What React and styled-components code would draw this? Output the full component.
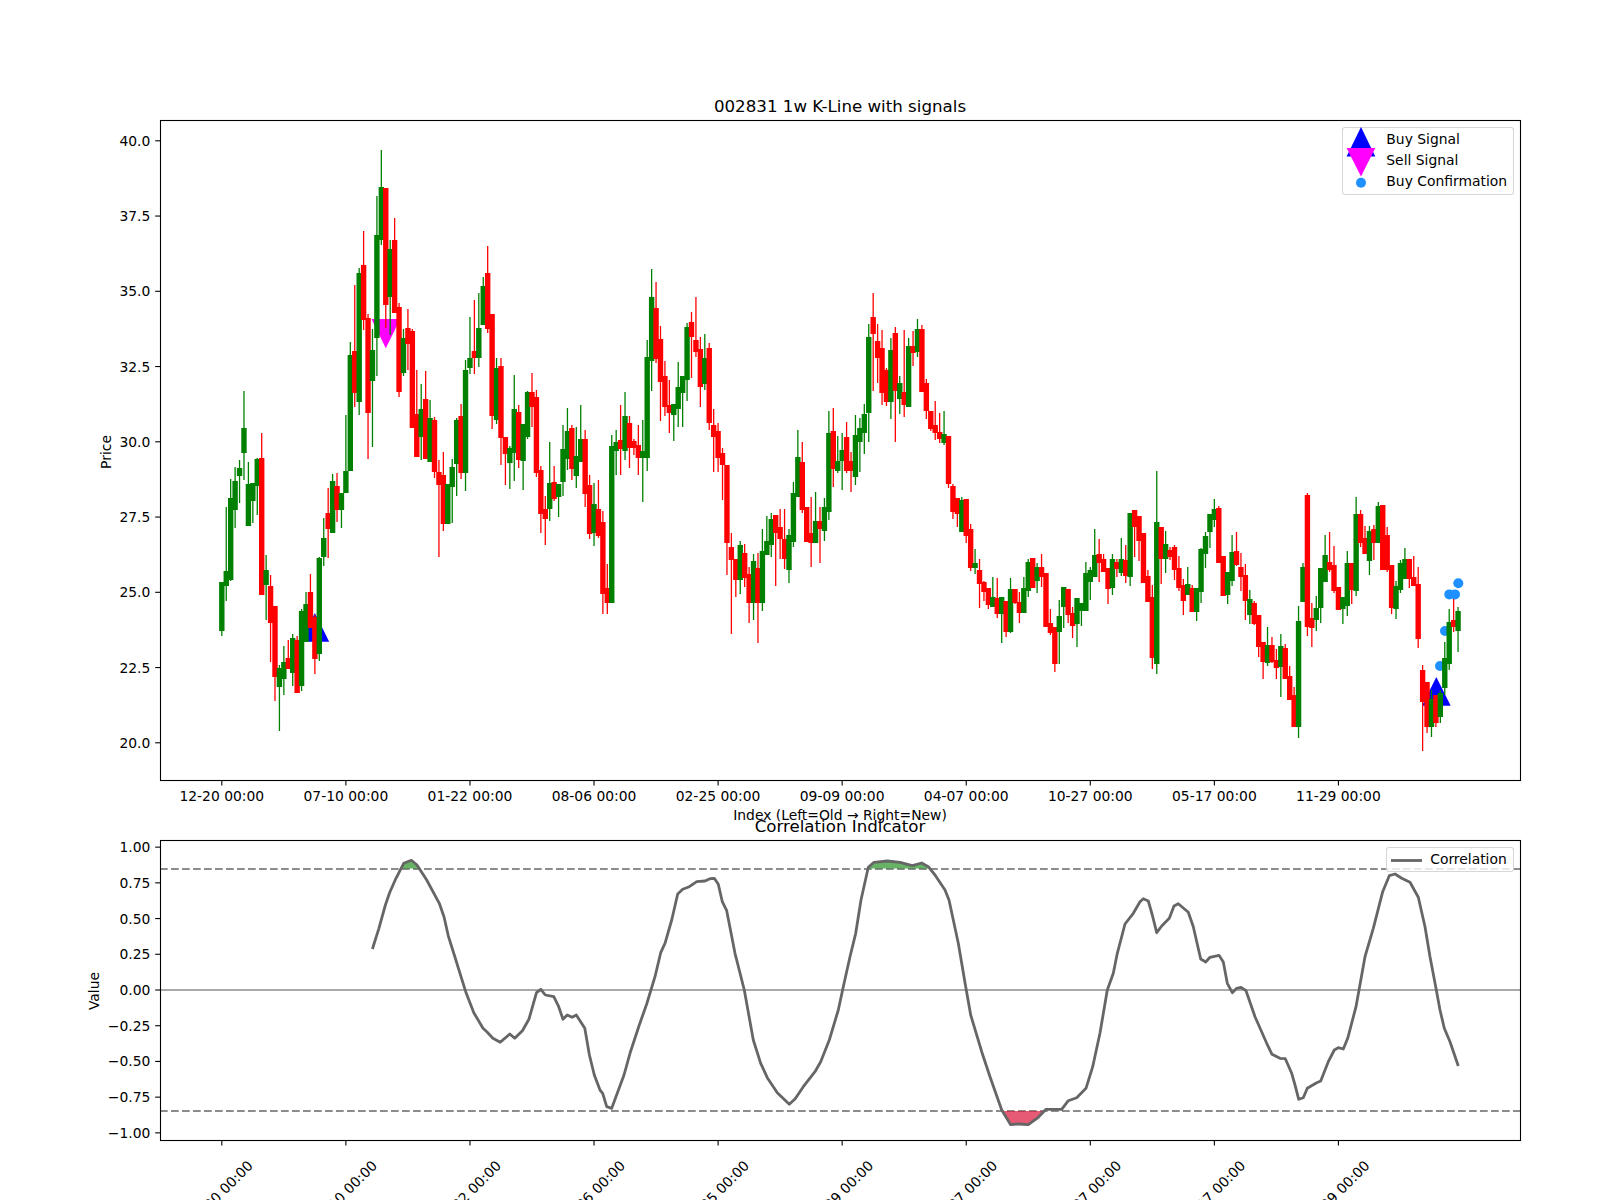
import styled, { createGlobalStyle } from "styled-components";

const FONT = `"DejaVu Sans", "Liberation Sans", sans-serif`;

// all chart data is in figure pixels: [bodyTop, bodyBottom, wickTop, wickBottom, colour]
const CANDLES = [
  [582,631,582,636,"g"],[571,586,507,601,"g"],[498,580,479,581,"g"],[481,510,467,528,"g"],[468,476,460,503,"g"],
  [428,453,391,480,"g"],[484,526,462,526,"g"],[483,501,483,523,"g"],[459,486,458,515,"g"],[458,595,433,595,"r"],
  [570,585,555,620,"g"],[586,623,575,662,"r"],[606,677,606,701,"r"],[668,687,665,731,"g"],[662,679,646,695,"g"],
  [658,669,640,669,"r"],[638,673,634,686,"g"],[640,693,636,693,"r"],[611,686,609,691,"g"],[604,642,592,642,"g"],
  [592,628,574,628,"r"],[617,659,615,674,"r"],[558,654,557,661,"g"],[538,557,518,566,"g"],[513,529,488,558,"r"],
  [481,533,474,533,"g"],[486,510,473,522,"r"],[493,510,493,528,"g"],[471,493,415,493,"g"],[355,471,342,471,"g"],
  [351,393,285,407,"r"],[273,402,268,415,"g"],[265,320,231,330,"r"],[318,413,314,459,"r"],[350,381,329,447,"g"],
  [235,338,196,376,"g"],[187,240,150,245,"g"],[188,305,188,328,"r"],[249,297,240,335,"g"],[240,313,218,313,"r"],
  [307,392,303,397,"r"],[338,373,329,376,"g"],[328,344,309,370,"r"],[331,428,329,428,"r"],[414,457,370,457,"r"],
  [409,437,384,460,"g"],[399,459,371,459,"r"],[418,462,400,462,"g"],[420,472,417,478,"r"],[472,485,460,557,"r"],
  [475,524,452,531,"r"],[484,524,484,524,"g"],[467,487,459,523,"g"],[420,464,418,496,"g"],[416,473,404,479,"r"],
  [370,473,360,491,"g"],[358,368,317,374,"g"],[351,358,300,374,"r"],[328,358,293,367,"g"],[286,325,277,325,"g"],
  [273,329,246,333,"r"],[314,416,314,429,"r"],[368,420,358,424,"g"],[366,438,358,465,"r"],[437,454,437,485,"r"],
  [448,463,446,489,"g"],[409,453,375,481,"g"],[412,460,405,468,"r"],[424,461,424,490,"g"],[392,437,391,439,"g"],
  [392,407,373,427,"r"],[397,473,390,477,"r"],[470,514,466,533,"r"],[509,519,496,545,"r"],[483,509,442,521,"g"],
  [482,499,466,501,"r"],[484,497,484,517,"g"],[449,482,425,496,"g"],[431,459,408,470,"g"],[428,469,425,480,"r"],
  [456,476,427,488,"g"],[439,462,405,462,"g"],[439,494,430,507,"r"],[485,534,475,539,"r"],[504,533,483,546,"g"],
  [509,536,480,538,"r"],[522,594,511,614,"r"],[588,603,564,614,"r"],[446,603,435,603,"g"],[442,451,430,475,"g"],
  [440,449,405,475,"r"],[416,451,392,460,"g"],[423,448,416,468,"r"],[441,448,439,455,"r"],[445,458,425,475,"r"],
  [451,458,420,502,"g"],[357,458,340,471,"g"],[297,361,269,391,"g"],[308,359,282,363,"r"],[339,382,326,421,"r"],
  [376,407,361,416,"r"],[405,413,380,433,"r"],[404,415,404,441,"g"],[387,409,362,427,"g"],[376,393,376,427,"g"],
  [327,380,323,401,"g"],[322,337,312,378,"r"],[340,352,297,357,"r"],[349,387,337,407,"r"],[358,384,334,390,"g"],
  [348,423,343,430,"r"],[425,437,409,472,"r"],[431,458,423,472,"r"],[453,465,448,500,"r"],[465,543,465,575,"r"],
  [547,560,533,634,"r"],[559,580,559,597,"r"],[545,580,541,594,"g"],[553,578,544,587,"r"],[574,603,567,623,"r"],
  [561,603,554,620,"g"],[568,603,553,643,"r"],[551,603,529,611,"g"],[541,555,516,555,"g"],[519,545,513,557,"g"],
  [515,533,515,586,"r"],[527,539,509,559,"r"],[539,559,509,569,"r"],[535,570,529,583,"g"],[493,542,482,547,"g"],
  [457,497,430,497,"g"],[462,510,442,513,"r"],[507,542,507,542,"r"],[533,543,497,567,"r"],[521,543,492,543,"g"],
  [521,529,507,563,"r"],[507,531,498,541,"g"],[433,512,411,520,"g"],[431,469,408,487,"r"],[461,471,436,473,"g"],
  [450,461,433,490,"g"],[437,471,422,473,"r"],[461,471,452,492,"r"],[435,477,415,485,"g"],[428,442,418,472,"g"],
  [414,433,404,454,"g"],[337,413,324,442,"g"],[317,334,293,391,"r"],[341,358,324,383,"r"],[348,393,330,405,"r"],
  [370,402,368,406,"r"],[350,402,338,419,"g"],[333,391,327,442,"r"],[383,399,376,414,"g"],[392,405,330,417,"r"],
  [346,407,338,407,"g"],[346,353,331,366,"r"],[329,352,319,357,"g"],[329,392,325,392,"r"],[383,411,379,419,"r"],
  [411,429,411,431,"r"],[425,433,401,440,"r"],[432,439,413,443,"r"],[434,443,411,445,"g"],[436,484,436,488,"r"],
  [486,512,484,519,"r"],[498,514,498,527,"r"],[500,532,497,532,"g"],[499,536,499,543,"r"],[529,568,524,571,"r"],
  [563,568,549,574,"g"],[570,584,559,608,"r"],[582,592,581,601,"r"],[588,605,588,609,"r"],[597,607,577,607,"g"],
  [598,614,578,618,"r"],[597,614,597,643,"g"],[601,632,601,637,"r"],[589,632,578,633,"g"],[589,603,589,604,"r"],
  [602,613,592,623,"r"],[588,613,577,613,"g"],[562,591,559,597,"g"],[558,588,558,588,"r"],[567,581,563,593,"g"],
  [567,577,554,587,"r"],[573,627,573,627,"r"],[623,633,609,635,"r"],[627,664,627,672,"r"],[616,632,600,664,"g"],
  [587,607,587,628,"g"],[589,615,589,623,"r"],[613,626,607,638,"r"],[598,624,598,647,"g"],[603,611,603,626,"g"],
  [573,611,562,611,"g"],[570,582,567,600,"g"],[555,577,529,577,"g"],[554,563,539,582,"r"],[559,572,554,572,"r"],
  [568,589,568,604,"r"],[559,588,554,595,"g"],[562,569,559,577,"r"],[559,573,538,576,"g"],[560,576,545,583,"r"],
  [513,577,513,586,"g"],[510,527,510,557,"r"],[516,541,516,561,"r"],[533,583,533,583,"r"],[576,602,570,602,"r"],
  [597,658,585,669,"r"],[522,664,471,674,"g"],[527,559,527,584,"r"],[544,559,531,573,"g"],[550,557,547,560,"r"],
  [547,570,545,580,"r"],[568,588,556,591,"r"],[585,601,579,615,"r"],[584,595,567,595,"g"],[588,612,585,612,"r"],
  [588,612,588,621,"g"],[549,592,548,603,"g"],[536,554,532,568,"g"],[514,532,514,548,"g"],[509,520,499,527,"g"],
  [508,563,506,563,"r"],[556,596,556,596,"r"],[572,595,572,604,"g"],[552,581,535,586,"g"],[551,565,532,566,"r"],
  [567,577,553,591,"r"],[575,601,564,620,"r"],[599,615,590,624,"g"],[603,624,601,625,"r"],[615,647,615,657,"r"],
  [642,662,642,679,"r"],[645,663,627,666,"g"],[645,662,637,663,"r"],[660,668,649,679,"r"],[646,667,634,697,"g"],
  [648,679,644,679,"r"],[676,700,666,700,"r"],[695,727,687,727,"r"],[621,727,606,738,"g"],[567,602,563,602,"g"],
  [495,627,493,636,"r"],[618,628,603,647,"r"],[608,620,596,631,"g"],[568,608,568,623,"g"],[555,582,535,582,"g"],
  [562,570,532,572,"r"],[565,591,546,593,"r"],[587,610,587,610,"r"],[597,609,597,624,"g"],[563,606,551,616,"g"],
  [563,590,563,604,"r"],[514,591,497,596,"g"],[514,543,510,547,"r"],[538,554,526,554,"r"],[531,561,526,575,"g"],
  [529,543,525,560,"r"],[506,543,502,543,"g"],[505,570,505,570,"r"],[535,570,527,572,"r"],[565,608,565,614,"r"],
  [586,609,581,619,"g"],[563,590,560,593,"g"],[559,579,548,579,"g"],[559,579,559,588,"r"],[577,586,556,586,"r"],
  [584,639,567,648,"r"],[670,702,665,751,"r"],[682,727,682,733,"r"],[699,727,690,737,"g"],[695,723,695,727,"r"],
  [693,717,690,723,"g"],[658,688,642,695,"g"],[622,664,609,670,"g"],[620,627,599,632,"r"],[611,631,607,652,"g"],
];

const CORRELATION = [
  [372.4,949],[378.9,928.3],[385.4,905],[389.6,892.7],[396,878.3],[403.7,863.3],[411.4,860.3],[417,865],[426.7,880],
  [439.3,903.3],[444,916.7],[448.5,936.7],[454.3,955],[461,976.7],[465.7,991.7],[473.8,1012.7],[483,1028.3],
  [486.8,1031.7],[492.9,1038.3],[500.2,1042.3],[509.8,1034],[514.7,1038.3],[522.4,1030.7],[528.9,1019.3],
  [536.5,992.7],[540.8,989.3],[545.3,995],[553.8,996.7],[558.7,1006.7],[563,1019.3],[567.2,1015],[572.1,1017.3],
  [576.3,1015],[584.8,1028.3],[589.4,1055],[594.3,1075],[600,1090],[602.7,1093.3],[606.7,1106.7],[611.7,1108.3],
  [624,1075],[630,1053.3],[639.3,1025],[646.7,1004],[655,976.7],[660.7,952.7],[665,943.3],[671.7,920],[677.7,894],
  [682.7,889.3],[689.3,886.7],[696.7,881.7],[705,881],[710,878.7],[714.3,878.3],[718.3,884.3],[722.3,901.7],
  [726.7,910.7],[735,953.3],[744.3,990],[753.3,1040],[760.7,1063.3],[767.3,1077.7],[777.3,1092.7],[789.3,1104.3],
  [795,1099],[803.3,1086.7],[815,1071.7],[820.7,1061.7],[829.3,1040],[838.3,1010],[843.3,986.7],[850,956.7],
  [855.7,933.3],[861,900],[868.3,867.3],[874,862.3],[887.3,861],[900,862.3],[912.3,865.7],[921.7,863],[928.3,866.7],
  [935,875],[945,890],[949,900],[958.3,943.3],[965.7,986.7],[970.7,1015],[981.7,1051.7],[990,1076.7],[1001.7,1110],
  [1010.7,1124.7],[1018.3,1124],[1028.3,1124.7],[1038.3,1117.3],[1046,1109.3],[1061.7,1109.3],[1068.3,1100.7],
  [1076.7,1097.7],[1086,1088.3],[1092.7,1066.7],[1100,1033],[1107.3,990],[1113.3,973.3],[1117.3,953.3],[1125,924],
  [1133.3,913.3],[1140,901.7],[1143.3,898.7],[1148.3,901],[1152.3,915],[1156.7,932.7],[1161.7,926],[1169.3,918.3],
  [1174,906],[1178.3,903.7],[1188.3,912.3],[1193.3,926.7],[1200.7,959],[1205.7,962],[1210,957.3],[1219,955.3],
  [1223.3,962],[1227.3,983.3],[1232.3,992.7],[1236.7,988.3],[1241,987.3],[1246,990.7],[1255,1016.7],[1266.7,1043.3],
  [1272,1054.3],[1280,1058.3],[1285.3,1058.7],[1291.7,1073.3],[1295,1085],[1298.7,1099.3],[1303.3,1097.7],
  [1307.3,1088.3],[1316.7,1082.7],[1320.7,1081],[1328.3,1061.7],[1334.3,1050],[1338.3,1047.7],[1343.3,1049],
  [1347.7,1038.3],[1356,1006.7],[1365,956.7],[1373.3,928.3],[1382.7,891.7],[1389.3,875.7],[1395,874],[1401.7,878.3],
  [1410,882.3],[1418.3,897.3],[1425,926.7],[1430,956.7],[1435.7,986.7],[1440,1010],[1444.3,1028.3],[1450,1041.7],
  [1458.3,1066],
];

const DATE_TICKS = [
  "12-20 00:00", "07-10 00:00", "01-22 00:00", "08-06 00:00", "02-25 00:00",
  "09-09 00:00", "04-07 00:00", "10-27 00:00", "05-17 00:00", "11-29 00:00",
];
const PRICE_TICKS = ["20.0", "22.5", "25.0", "27.5", "30.0", "32.5", "35.0", "37.5", "40.0"];
const VALUE_TICKS = ["−1.00", "−0.75", "−0.50", "−0.25", "0.00", "0.25", "0.50", "0.75", "1.00"];

const candleX = (i) => 221.82 + 4.431 * i;
const priceY = (v) => 742.8 - (v - 20) * 30.1;
const valueY = (v) => 990 - v * 142.86;
const toPoints = (pts) => pts.map((p) => p.join(",")).join(" ");

const GlobalStyle = createGlobalStyle`
  html, body {
    margin: 0;
    background: #fff;
  }
`;

const Figure = styled.div`
  box-sizing: border-box;
  width: 1600px;
  height: 1200px;
  overflow: hidden;
  padding: 96px 80px 0 160px;
  display: flex;
  flex-direction: column;
  gap: 36px;
  background: #fff;
  color: #000;
  font-family: ${FONT};
`;

const Panel = styled.section`
  width: 1360px;
`;

const Title = styled.div`
  height: 24px;
  line-height: 22px;
  font-size: 16.67px;
  text-align: center;
`;

const Axes = styled.div`
  position: relative;
  height: ${(props) => props.$height}px;
`;

const Plot = styled.svg`
  display: block;
  width: 1360px;
  height: ${(props) => props.$height}px;
  overflow: visible;
`;

const Spines = styled.rect`
  fill: none;
  stroke: #000;
  stroke-width: 1.1;
`;

const Tick = styled.line`
  stroke: #000;
  stroke-width: 1.1;
`;

const Label = styled.text`
  font-family: ${FONT};
  font-size: 13.89px;
  fill: #000;
  text-anchor: ${(props) => props.$anchor || "middle"};
`;

const Wick = styled.line`
  stroke: ${(props) => (props.$kind === "r" ? "#ff0000" : "#008000")};
  stroke-width: 1.3;
`;

const Body = styled.rect`
  fill: ${(props) => (props.$kind === "r" ? "#ff0000" : "#008000")};
`;

const Marker = styled.polygon`
  fill: ${(props) => props.$color};
`;

const Dot = styled.circle`
  fill: #1e90ff;
`;

const RefLine = styled.line`
  stroke: ${(props) => (props.$dashed ? "#8c8c8c" : "#a9a9a9")};
  stroke-width: 2;
  stroke-dasharray: ${(props) => (props.$dashed ? "7.7 3.3" : "none")};
`;

const Zone = styled.polygon`
  fill: ${(props) => props.$color};
  fill-opacity: ${(props) => props.$opacity};
`;

const Curve = styled.polyline`
  fill: none;
  stroke: #666;
  stroke-width: 2.8;
  stroke-linejoin: round;
`;

const Legend = styled.div`
  position: absolute;
  box-sizing: border-box;
  top: ${(props) => props.$top}px;
  right: ${(props) => props.$right}px;
  width: ${(props) => props.$width}px;
  height: ${(props) => props.$h}px;
  padding-top: ${(props) => props.$pad || 0}px;
  border: 1px solid rgba(204, 204, 204, 0.8);
  border-radius: 3px;
  background: rgba(255, 255, 255, 0.8);
  font-size: 13.89px;
`;

const LegendRow = styled.div`
  display: flex;
  align-items: center;
  height: ${(props) => props.$h}px;
`;

const LegendKey = styled.svg`
  flex: none;
  width: ${(props) => props.$width}px;
  height: 21px;
  overflow: visible;
`;

const LegendRule = styled.line`
  stroke: #666;
  stroke-width: 2.8;
`;

const CandleChart = () => (
  <Plot $height={660} viewBox="160 120 1360 660">
    <Marker $color="#0000ff" points="300.5,641.7 329.2,641.7 314.9,613" />
    <Marker $color="#0000ff" points="1422,705.7 1450.7,705.7 1436.3,677" />
    <Marker $color="#ff00ff" points="371.5,319 400.2,319 385.8,348.3" />
    {[[1440, 666], [1445, 631], [1449.3, 594.4], [1455, 594.4], [1458.3, 583.2]].map(([x, y]) => (
      <Dot key={x} cx={x} cy={y} r={5} />
    ))}
    {CANDLES.map(([top, bottom, high, low, kind], i) => (
      <g key={i}>
        <Wick $kind={kind} x1={candleX(i)} x2={candleX(i)} y1={high} y2={low} />
        <Body $kind={kind} x={candleX(i) - 2.7} width={5.4} y={top} height={bottom - top} />
      </g>
    ))}
    <Spines x={160.5} y={120.5} width={1360} height={660} />
    {PRICE_TICKS.map((t) => (
      <g key={t}>
        <Tick x1={155.2} x2={160} y1={priceY(+t)} y2={priceY(+t)} />
        <Label $anchor="end" x={150.3} y={priceY(+t) + 5}>{t}</Label>
      </g>
    ))}
    {DATE_TICKS.map((t, i) => (
      <g key={t}>
        <Tick x1={candleX(i * 28)} x2={candleX(i * 28)} y1={781} y2={785.4} />
        <Label x={candleX(i * 28)} y={801}>{t}</Label>
      </g>
    ))}
    <Label x={840} y={820}>Index (Left=Old → Right=New)</Label>
    <Label transform="translate(111 452) rotate(-90)">Price</Label>
  </Plot>
);

const CorrelationChart = () => (
  <Plot $height={300} viewBox="160 840 1360 300">
    <RefLine x1={160} x2={1520} y1={990} y2={990} />
    <RefLine $dashed x1={160} x2={1520} y1={869} y2={869} />
    <RefLine $dashed x1={160} x2={1520} y1={1111} y2={1111} />
    <Zone $color="#008000" $opacity={0.6} points="402.6,868.6 403.7,863.3 411.4,860.3 417,865 419,868.6" />
    <Zone $color="#008000" $opacity={0.6} points="868.3,868.6 868.3,867.3 874,862.3 887.3,861 900,862.3 912.3,865.7 921.7,863 928.3,866.7 930,868.6" />
    <Zone $color="#dc143c" $opacity={0.7} points="1002,1111 1010.7,1124.7 1018.3,1124 1028.3,1124.7 1038.3,1117.3 1044.5,1111" />
    <Curve points={toPoints(CORRELATION)} />
    <Spines x={160.5} y={840.5} width={1360} height={300} />
    {VALUE_TICKS.map((t) => {
      const v = +t.replace("−", "-");
      return (
        <g key={t}>
          <Tick x1={155.2} x2={160} y1={valueY(v)} y2={valueY(v)} />
          <Label $anchor="end" x={150.3} y={valueY(v) + 5}>{t}</Label>
        </g>
      );
    })}
    {DATE_TICKS.map((t, i) => (
      <g key={t}>
        <Tick x1={candleX(i * 28)} x2={candleX(i * 28)} y1={1141} y2={1145.4} />
        <Label transform={`translate(${candleX(i * 28) - 1.5} 1193) rotate(-45)`} y={5}>{t}</Label>
      </g>
    ))}
    <Label transform="translate(98.5 991) rotate(-90)">Value</Label>
  </Plot>
);

const App = () => (
  <>
    <GlobalStyle />
    <Figure>
      <Panel>
        <Title>002831 1w K-Line with signals</Title>
        <Axes $height={660}>
          <CandleChart />
          <Legend $top={7} $right={6.3} $width={171.4} $h={67.7}>
            <LegendRow $h={21.3}>
              <LegendKey $width={43}>
                <Marker $color="#0000ff" points="3.6,28.4 32.3,28.4 18,-1" />
              </LegendKey>
              Buy Signal
            </LegendRow>
            <LegendRow $h={20.7}>
              <LegendKey $width={43}>
                <Marker $color="#ff00ff" points="3.6,-1 32.3,-1 18,27.6" />
              </LegendKey>
              Sell Signal
            </LegendRow>
            <LegendRow $h={21.6}>
              <LegendKey $width={43}>
                <Dot cx={18} cy={12.8} r={5} />
              </LegendKey>
              Buy Confirmation
            </LegendRow>
          </Legend>
        </Axes>
      </Panel>
      <Panel>
        <Title>Correlation Indicator</Title>
        <Axes $height={300}>
          <CorrelationChart />
          <Legend $top={7.3} $right={6.2} $width={127.6} $h={25}>
            <LegendRow $h={21.5}>
              <LegendKey $width={43}>
                <LegendRule x1={4} x2={35} y1={11.5} y2={11.5} />
              </LegendKey>
              Correlation
            </LegendRow>
          </Legend>
        </Axes>
      </Panel>
    </Figure>
  </>
);

export default App;
